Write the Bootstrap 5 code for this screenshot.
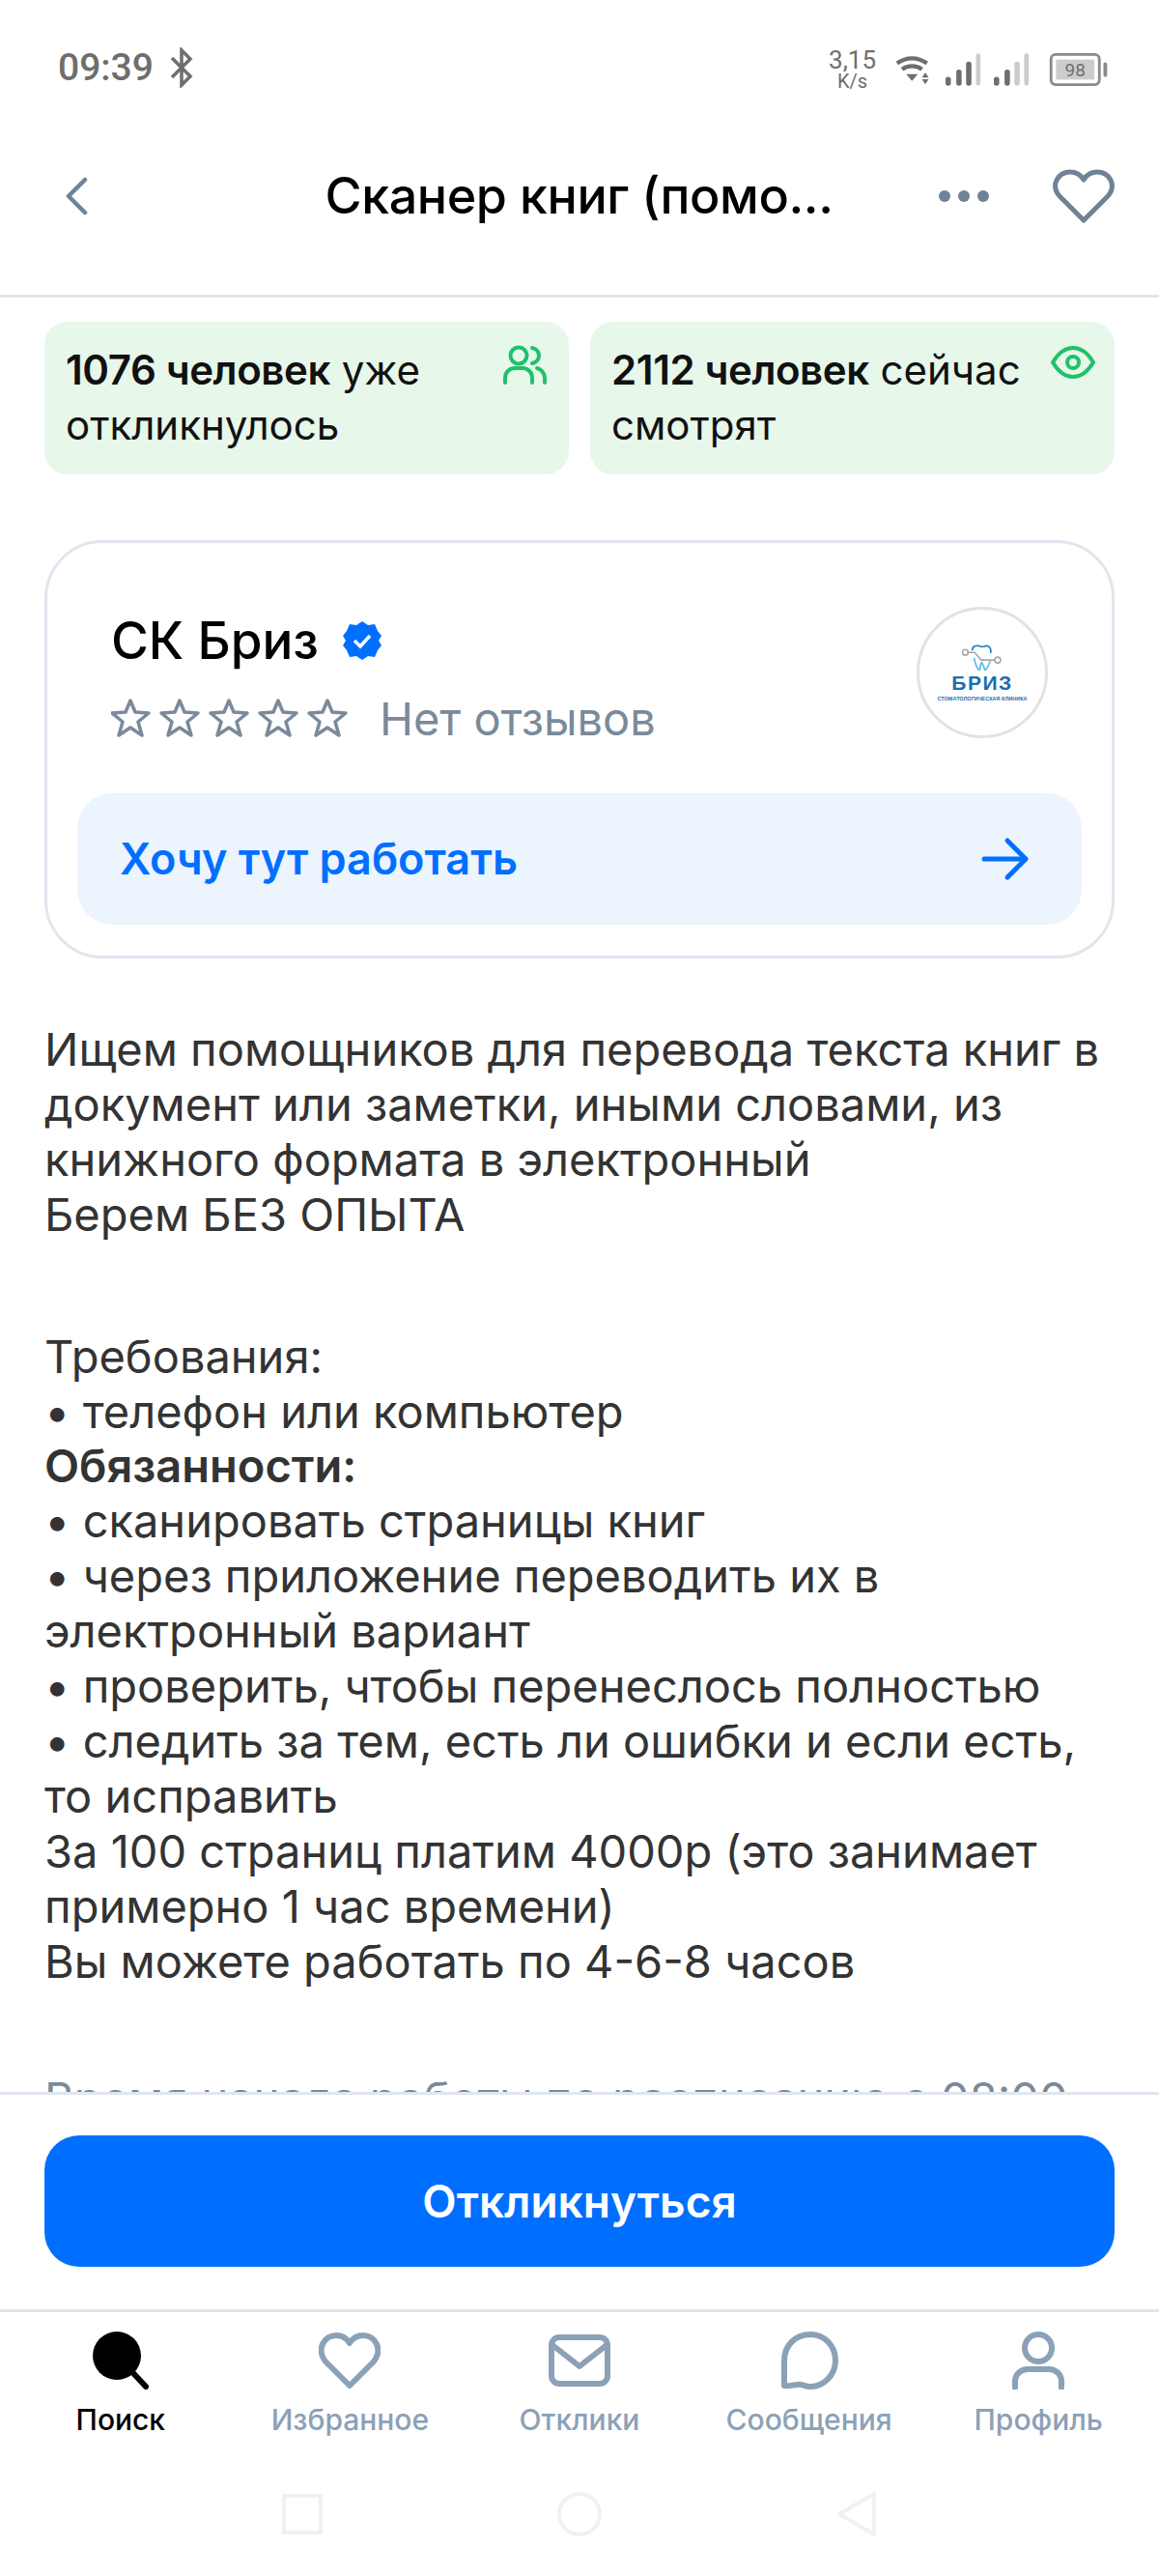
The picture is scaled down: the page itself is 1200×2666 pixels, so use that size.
<!DOCTYPE html>
<html lang="ru">
<head>
  <meta charset="UTF-8" />
  <meta name="viewport" content="width=device-width, initial-scale=1" />
  <title>Сканер книг</title>
  <link href="https://cdn.jsdelivr.net/npm/bootstrap@5.3.3/dist/css/bootstrap.min.css" rel="stylesheet">
  <style>
    body { font-family: Inter, "Noto Sans", sans-serif; background: #fff; color: #333; }
    .screen { width: 1200px; height: 2666px; overflow: hidden; }
    .status-bar { height: 122px; padding: 48px 52px 0 60px; color: #6e6e6e; }
    .status-time { font-family: Roboto, sans-serif; font-size: 39px; font-weight: 500; line-height: 44px; }
    .status-right { margin-top: 2px; }
    .net-speed { font-family: Roboto, sans-serif; font-size: 26px; line-height: 24px; text-align: center; margin-right: 19px; }
    .net-speed span { font-size: 20px; display: block; line-height: 20px; }
    .gap-bars { margin-left: 13px; }
    .gap-bat { margin-left: 20px; }
    .top-bar { height: 186px; padding: 0 46px 21px 67px; border-bottom: 3px solid #e0e6ee; }
    .top-title { font-size: 52px; font-weight: 500; color: #000; letter-spacing: -.4px; padding-left: 137px; }
    .dots-ico { margin-right: 65px; }
    .scroll-area { flex: 1 1 0; overflow: hidden; padding: 25px 46px 0; }
    .stat-box { width: 543px; height: 158px; background: #e7f7ea; border-radius: 24px; padding: 21px 20px 0 22px; font-size: 42px; line-height: 57px; color: #111; }
    .stat-box b { font-weight: 600; letter-spacing: -.4px; }
    .stat-ico { position: absolute; top: 24px; right: 20px; }
    .ico-people { right: 23px; }
    .company-box { margin-top: 68px; height: 433px; border: 3px solid #e0e6ee; border-radius: 60px; padding: 66px 31px 0; }
    .company-top { height: 136px; padding: 0 35px; }
    .company-name { font-size: 53px; font-weight: 500; color: #000; line-height: 64px; margin-top: 3px; }
    .rating-row { margin-top: 27px; height: 44px; }
    .no-reviews { font-size: 47px; line-height: 44px; color: #7a8a9a; margin-left: 28px; }
    .logo-circle { width: 136px; height: 136px; border: 3px solid #e2e2e2; border-radius: 50%; }
    .logo-word { font-family: "Liberation Sans", sans-serif; font-size: 21px; font-weight: 700; letter-spacing: 1.5px; color: #1a6db3; line-height: 20px; margin-top: 3px; }
    .logo-sub { font-family: "Liberation Sans", sans-serif; font-size: 5.5px; font-weight: 700; color: #1a6db3; line-height: 8px; white-space: nowrap; margin-top: 2px; }
    .want-btn { height: 136px; margin-top: 57px; background: #ecf4fe; border-radius: 36px; color: #006fff; font-size: 45px; font-weight: 600; padding: 0 54px 0 44px; }
    .descr { margin-top: 66px; font-size: 47px; line-height: 56.9px; color: #333; }
    .descr b { font-weight: 600; }
    .descr-first { margin-bottom: 90px; }
    .descr-second { margin-bottom: 85px; }
    .descr-faded { color: #7a8a9a; white-space: nowrap; }
    .bottom-action { height: 228px; border-top: 3px solid #e0e6ee; border-bottom: 3px solid #e0e6ee; padding: 42px 46px 0; background: #fff; }
    .apply-btn { width: 100%; height: 136px; background: #006fff; border: 0; border-radius: 36px; color: #fff; font-size: 46px; font-weight: 600; }
    .tab-bar { height: 155px; padding: 20px 6px 0; }
    .tab-item { flex: 1 1 0; color: #8ba1b7; font-size: 30px; font-weight: 500; line-height: 36px; }
    .tab-item svg { margin-bottom: 13px; }
    .tab-item.on { color: #000; }
    .sys-nav { height: 118px; padding-bottom: 10px; gap: 241px; }
  </style>
</head>
<body>
  <div class="screen d-flex flex-column">
    <div class="status-bar d-flex justify-content-between align-items-start flex-shrink-0">
      <div class="d-flex align-items-center gap-3">
        <span class="status-time">09:39</span>
        <svg width="26" height="42" viewBox="0 0 26 42" fill="none" stroke="#6e6e6e" stroke-width="3.5"><path d="M3 11 22 30 13 39V3l9 9L3 31"/></svg>
      </div>
      <div class="status-right d-flex align-items-center">
        <div class="net-speed">3,15<span>K/s</span></div>
        <svg width="40" height="31" viewBox="0 0 46 36" fill="none" stroke="#6e6e6e" stroke-width="5"><path d="M3 10c11-8 25-8 36 0M9 17c7-5 17-5 24 0"/><path d="M14 23h14l-7 8z" fill="#6e6e6e" stroke="none"/><path d="M37 21l4 6h-8zM37 35l-4-6h8z" fill="#6e6e6e" stroke="none"/></svg>
        <svg class="gap-bars" width="37" height="34" viewBox="0 0 40 36"><rect x="0" y="26" width="6" height="10" rx="3" fill="#6e6e6e"/><rect x="12" y="18" width="6" height="18" rx="3" fill="#6e6e6e"/><rect x="23" y="9" width="6" height="27" rx="3" fill="#6e6e6e"/><rect x="34" y="0" width="5" height="36" rx="2.5" fill="#ccc"/></svg>
        <svg class="gap-bars" width="37" height="34" viewBox="0 0 40 36"><rect x="0" y="26" width="6" height="10" rx="3" fill="#6e6e6e"/><rect x="12" y="18" width="6" height="18" rx="3" fill="#6e6e6e"/><rect x="23" y="9" width="6" height="27" rx="3" fill="#ccc"/><rect x="34" y="0" width="5" height="36" rx="2.5" fill="#ccc"/></svg>
        <svg class="gap-bat" width="62" height="34" viewBox="0 0 64 36"><rect x="1.5" y="1.5" width="53" height="33" rx="5" fill="none" stroke="#8a8a8a" stroke-width="3"/><rect x="7" y="7" width="42" height="22" fill="#ccc"/><text x="28" y="25" font-family="Roboto, sans-serif" font-size="20" text-anchor="middle" fill="#6e6e6e">98</text><rect x="59" y="10" width="4" height="16" rx="2" fill="#8a8a8a"/></svg>
      </div>
    </div>

    <div class="top-bar d-flex align-items-center flex-shrink-0">
      <svg width="24" height="40" viewBox="0 0 24 40" fill="none" stroke="#6f8296" stroke-width="4.5" stroke-linecap="round" stroke-linejoin="round"><path d="M21 3 4 20l17 17"/></svg>
      <div class="top-title flex-grow-1 text-center">Сканер книг (помо...</div>
      <svg class="dots-ico" width="54" height="14" viewBox="0 0 54 14" fill="#6f8296"><circle cx="7" cy="7" r="6"/><circle cx="27" cy="7" r="6"/><circle cx="47" cy="7" r="6"/></svg>
      <svg width="64" height="58" viewBox="0 0 64 58" fill="none" stroke="#6f8296" stroke-width="5" stroke-linejoin="round"><path d="M32 54 7 29C-3 17 6 4 18 4c6 0 11 3 14 8 3-5 8-8 14-8 12 0 21 13 11 25z"/></svg>
    </div>

    <div class="scroll-area">
      <div class="d-flex justify-content-between">
        <div class="stat-box position-relative">
          <b>1076 человек</b> уже<br>откликнулось
          <svg class="stat-ico ico-people" width="46" height="42" viewBox="0 0 46 42" fill="none" stroke="#1fc16b" stroke-width="4" stroke-linecap="round"><circle cx="17" cy="11" r="8.5"/><path d="M3 39v-5c0-6 5-10 10-10h8c5 0 10 4 10 10v5M31 3c5 1 7 5 7 8s-2 7-7 8M36 24c4 1 8 5 8 10v5"/></svg>
        </div>
        <div class="stat-box position-relative">
          <b>2112 человек</b> сейчас<br>смотрят
          <svg class="stat-ico" width="46" height="36" viewBox="0 0 46 36" fill="none" stroke="#1fc16b" stroke-width="4"><path d="M2 18C8 8 15 3 23 3s15 5 21 15c-6 10-13 15-21 15S8 28 2 18z"/><circle cx="23" cy="18" r="6"/></svg>
        </div>
      </div>

      <div class="company-box">
        <div class="company-top d-flex justify-content-between">
          <div>
            <div class="company-name d-flex align-items-center gap-4">СК Бриз
              <svg width="42" height="42" viewBox="0 0 42 42"><path d="M21 1l6 4 7-1 3 7 4 5-3 5 3 5-4 5-3 7-7-1-6 4-6-4-7 1-3-7-4-5 3-5-3-5 4-5 3-7 7 1z" fill="#006fff"/><path d="M13 21l6 6 10-11" fill="none" stroke="#fff" stroke-width="3.5"/></svg>
            </div>
            <div class="rating-row d-flex align-items-center">
              <svg width="250" height="44" viewBox="0 0 250 44" fill="none" stroke="#7a8a9a" stroke-width="3.5" stroke-linejoin="round">
                <path id="st" d="M20 3l5 12 14 1-11 9 4 14-12-8-12 8 4-14-11-9 14-1z"/>
                <use href="#st" x="51"/><use href="#st" x="102"/><use href="#st" x="153"/><use href="#st" x="204"/>
              </svg>
              <span class="no-reviews">Нет отзывов</span>
            </div>
          </div>
          <div class="logo-circle d-flex flex-column align-items-center justify-content-center">
            <svg width="42" height="28" viewBox="0 0 127 85" fill="none" stroke-width="5">
              <path d="M32 22C32 8 45 5 55 8c7 3 11 3 18 0 12-3 19 7 17 22" stroke="#1a7fc4"/>
              <path d="M38 45c4 20 10 35 17 40 2-10 3-23 7-25 4 5 8 15 10 25 8-7 14-23 16-30" stroke="#5cb8e6"/>
              <path d="M19 28h21l20 24h43" stroke="#a8a8a8"/>
              <circle cx="10" cy="28" r="9" stroke="#a8a8a8"/>
              <circle cx="112" cy="52" r="9" stroke="#a8a8a8"/>
            </svg>
            <div class="logo-word">БРИЗ</div>
            <div class="logo-sub">СТОМАТОЛОГИЧЕСКАЯ КЛИНИКА</div>
          </div>
        </div>
        <div class="want-btn d-flex justify-content-between align-items-center">
          <span>Хочу тут работать</span>
          <svg width="50" height="46" viewBox="0 0 50 46" fill="none" stroke="#006fff" stroke-width="5" stroke-linecap="round" stroke-linejoin="round"><path d="M3 23h43M27 4l19 19-19 19"/></svg>
        </div>
      </div>

      <div class="descr">
        <div class="descr-first">Ищем помощников для перевода текста книг в<br>документ или заметки, иными словами, из<br>книжного формата в электронный<br>Берем БЕЗ ОПЫТА</div>
        <div class="descr-second">Требования:<br>• телефон или компьютер<br><b>Обязанности:</b><br>• сканировать страницы книг<br>• через приложение переводить их в<br>электронный вариант<br>• проверить, чтобы перенеслось полностью<br>• следить за тем, есть ли ошибки и если есть,<br>то исправить<br>За 100 страниц платим 4000р (это занимает<br>примерно 1 час времени)<br>Вы можете работать по 4-6-8 часов</div>
        <div class="descr-faded">Время начала работы по расписанию с 08:00</div>
      </div>
    </div>

    <div class="bottom-action flex-shrink-0">
      <button class="apply-btn" type="button">Откликнуться</button>
    </div>

    <div class="tab-bar d-flex flex-shrink-0">
      <div class="tab-item on d-flex flex-column align-items-center">
        <svg width="60" height="60" viewBox="0 0 60 60"><circle cx="26" cy="25" r="25" fill="#000"/><path d="M42 42l14 15" stroke="#000" stroke-width="6" stroke-linecap="round"/></svg>
        Поиск
      </div>
      <div class="tab-item d-flex flex-column align-items-center">
        <svg width="64" height="60" viewBox="0 0 64 60" fill="none" stroke="#8ba1b7" stroke-width="6" stroke-linejoin="round"><path d="M32 56 7 31C-3 18 6 4 18 4c6 0 11 3 14 8 3-5 8-8 14-8 12 0 21 14 11 27z"/></svg>
        Избранное
      </div>
      <div class="tab-item d-flex flex-column align-items-center">
        <svg width="64" height="60" viewBox="0 0 64 60" fill="none" stroke="#8ba1b7" stroke-width="6" stroke-linejoin="round"><rect x="3" y="6" width="58" height="48" rx="8"/><path d="M4 14l28 22 28-22"/></svg>
        Отклики
      </div>
      <div class="tab-item d-flex flex-column align-items-center">
        <svg width="60" height="60" viewBox="0 0 60 60" fill="none" stroke="#8ba1b7" stroke-width="6" stroke-linejoin="round"><path d="M4 56V30C4 14 16 3 31 3s26 12 26 27-12 27-26 27c-6 0-8-3-14-2-4 0-8 2-13 1z"/></svg>
        Сообщения
      </div>
      <div class="tab-item d-flex flex-column align-items-center">
        <svg width="54" height="60" viewBox="0 0 54 60" fill="none" stroke="#8ba1b7" stroke-width="6" stroke-linecap="round"><circle cx="27" cy="17" r="14"/><path d="M3 58V52c0-8 6-13 13-13h22c7 0 13 5 13 13v6"/></svg>
        Профиль
      </div>
    </div>

    <div class="sys-nav d-flex justify-content-center align-items-center flex-shrink-0">
      <svg width="44" height="44" viewBox="0 0 44 44" fill="none" stroke="#f1f1f1" stroke-width="4"><rect x="3" y="3" width="38" height="38"/></svg>
      <svg width="48" height="48" viewBox="0 0 48 48" fill="none" stroke="#f1f1f1" stroke-width="4"><circle cx="24" cy="24" r="21"/></svg>
      <svg width="44" height="48" viewBox="0 0 44 48" fill="none" stroke="#f1f1f1" stroke-width="4" stroke-linejoin="round"><path d="M40 3v42L4 24z"/></svg>
    </div>
  </div>
  <script src="https://cdn.jsdelivr.net/npm/bootstrap@5.3.3/dist/js/bootstrap.bundle.min.js"></script>
</body>
</html>
